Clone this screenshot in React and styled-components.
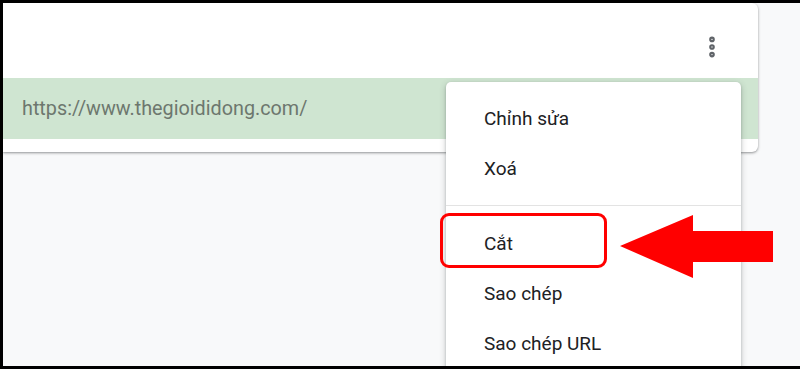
import React from "react";
import styled, { createGlobalStyle, css } from "styled-components";
import { EllipsisVertical } from "lucide-react";

const GlobalStyle = createGlobalStyle`
  html, body {
    margin: 0;
    padding: 0;
    background: #000;
  }
  body {
    font-family: Roboto, "Noto Sans", Arial, sans-serif;
  }
`;

const Frame = styled.div`
  position: relative;
  width: 800px;
  height: 369px;
  box-sizing: border-box;
  border: 3px solid #000;
  border-right: 0;
  background: #f8f9fa;
  overflow: hidden;
`;

const Card = styled.div`
  width: 755px;
  height: 149px;
  background: #fff;
  border-radius: 0 6px 6px 0;
  box-shadow: 0 1px 3px rgba(60, 64, 67, 0.38), 0 1px 2px rgba(60, 64, 67, 0.22);
  display: flex;
  flex-direction: column;
`;

const Header = styled.div`
  height: 75px;
  box-sizing: border-box;
  display: flex;
  justify-content: flex-end;
  align-items: flex-start;
  padding: 30px 32px 0 0;
`;

const KebabButton = styled.div`
  width: 28px;
  height: 28px;
  display: flex;
  align-items: center;
  justify-content: center;
  color: #5f6368;
`;

const UrlRow = styled.div`
  height: 61px;
  background: #cfe5d1;
  display: flex;
  align-items: center;
  padding-left: 19px;
  font-size: 19.8px;
  color: #6d776e;
`;

const Menu = styled.div`
  position: absolute;
  left: 443px;
  top: 79px;
  width: 295px;
  height: 320px;
  background: #fff;
  border-radius: 5px;
  box-shadow: 0 2px 6px rgba(60, 64, 67, 0.3), 0 1px 2px rgba(60, 64, 67, 0.25);
  padding-top: 11px;
  box-sizing: border-box;
`;

const Item = styled.div`
  position: relative;
  height: 50px;
  display: flex;
  align-items: center;
  padding-left: 38px;
  font-size: 19px;
  color: #202124;
  ${(p) =>
    p.$highlighted &&
    css`
      &::after {
        content: "";
        position: absolute;
        left: -6px;
        top: -5px;
        width: 167px;
        height: 55px;
        box-sizing: border-box;
        border: 3px solid #f00;
        border-radius: 9px;
      }
    `}
`;

const Divider = styled.div`
  height: 1px;
  background: #e3e3e3;
  margin: 12px 0;
`;

const Arrow = styled.svg`
  position: absolute;
  left: 617px;
  top: 209px;
`;

export default function App() {
  return (
    <>
      <GlobalStyle />
      <Frame>
        <Card>
          <Header>
            <KebabButton>
              <EllipsisVertical size={26} strokeWidth={3.2} />
            </KebabButton>
          </Header>
          <UrlRow>https://www.thegioididong.com/</UrlRow>
        </Card>
        <Menu>
          <Item>Chỉnh sửa</Item>
          <Item>Xoá</Item>
          <Divider />
          <Item $highlighted>Cắt</Item>
          <Item>Sao chép</Item>
          <Item>Sao chép URL</Item>
        </Menu>
        <Arrow width="153" height="66" viewBox="0 0 153 66">
          <polygon points="0,34 73,3 73,19 153,19 153,50 73,50 73,66" fill="#f00" />
        </Arrow>
      </Frame>
    </>
  );
}
